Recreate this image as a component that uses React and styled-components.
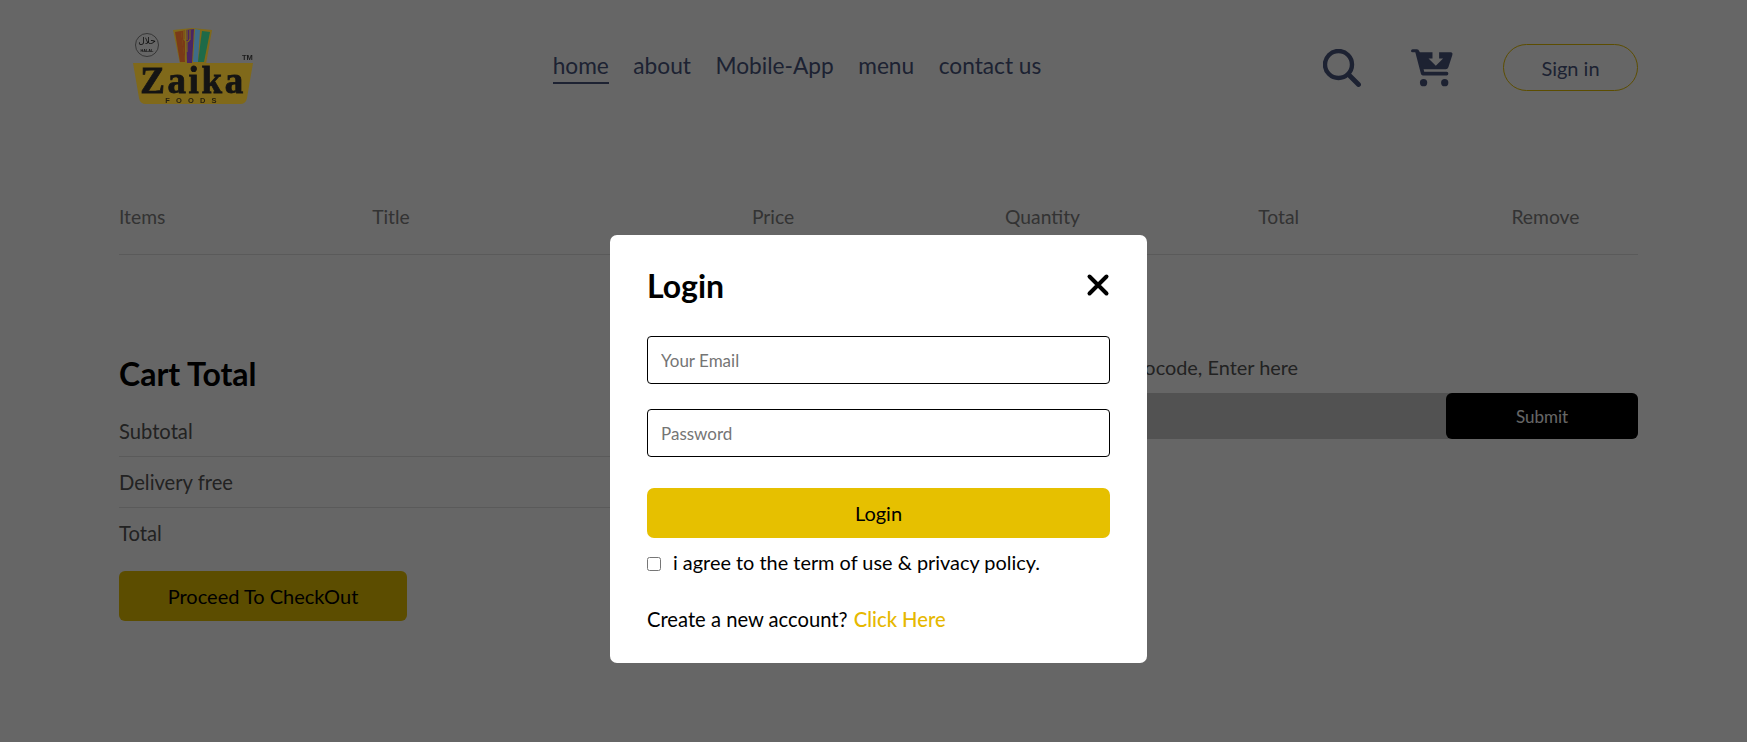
import React from "react";
import styled, { createGlobalStyle } from "styled-components";

const FONT = `"Lato", "Noto Sans", sans-serif`;

const Global = createGlobalStyle`
  * { box-sizing: border-box; }
  html, body { margin: 0; padding: 0; background: #fff; }
  body { font-family: ${FONT}; min-height: 742px; overflow: hidden; }
`;

const Page = styled.div`
  width: 1519px;
  margin: 0 0 0 119px;
`;

const Nav = styled.header`
  height: 134px;
  padding-top: 24px;
  display: flex;
  align-items: flex-start;
  justify-content: space-between;
`;

const LogoSvg = styled.svg`
  width: 150px;
  height: 90px;
  display: block;
  position: relative;
  z-index: 2;
`;

const Menu = styled.ul`
  display: flex;
  gap: 24.5px;
  list-style: none;
  margin: 0 0 0 2px;
  padding: 0;
  padding-top: 28px;
  color: #49557e;
  font-size: 22.7px;
`;

const MenuItem = styled.li`
  padding-bottom: 2px;
  line-height: 28px;
  border-bottom: ${(p) => (p.$active ? "2px solid #49557e" : "2px solid transparent")};
`;

const NavRight = styled.div`
  display: flex;
  align-items: center;
  gap: 50px;
  padding-top: 20px;
`;

const SignIn = styled.button`
  width: 135px;
  height: 47px;
  border: 1px solid #e6c000;
  border-radius: 24px;
  background: transparent;
  color: #49557e;
  font: 400 20px ${FONT};
`;

const Cart = styled.main`
  padding-top: 71px;
`;

const HeadRow = styled.div`
  display: grid;
  grid-template-columns: 1fr 1.5fr 1fr 1fr 1fr 0.5fr;
  color: #808080;
  font-size: 19.3px;
  line-height: 24px;
`;

const Rule = styled.hr`
  border: 0;
  height: 1px;
  background: #e2e2e2;
  margin: ${(p) => p.$m || "13px 0"};
`;

const Bottom = styled.section`
  margin-top: 99px;
  display: flex;
  gap: 210px;
`;

const Totals = styled.div`
  flex: 1;
`;

const Heading = styled.h2`
  margin: 0 0 25px;
  font-size: 32px;
  line-height: 40px;
  font-weight: 700;
  color: #000;
`;

const TotalRow = styled.div`
  display: flex;
  justify-content: space-between;
  color: #555;
  font-size: 20.2px;
  line-height: 24px;
`;

const Checkout = styled.button`
  margin-top: 26px;
  width: 288px;
  height: 50px;
  border: 0;
  border-radius: 6px;
  background: #e6c000;
  color: #000;
  font: 400 20px ${FONT};
`;

const Promo = styled.div`
  flex: 1;
  padding-top: 1px;
`;

const PromoText = styled.p`
  margin: 0 0 14px;
  color: #555;
  font-size: 19.9px;
  line-height: 24px;
`;

const PromoBox = styled.div`
  display: flex;
  height: 46px;
  background: #cdcdcd;
  border-radius: 6px;
  justify-content: flex-end;
`;

const Submit = styled.button`
  width: 192px;
  border: 0;
  border-radius: 6px;
  background: #000;
  color: #fff;
  font: 400 17px ${FONT};
`;

const Overlay = styled.div`
  position: fixed;
  inset: 0;
  z-index: 1;
  background: rgba(0, 0, 0, 0.6);
  display: flex;
  justify-content: center;
  padding: 235px 0 0 10px;
`;

const Modal = styled.form`
  width: 537px;
  height: 428px;
  padding: 30px 37px 0;
  background: #fff;
  border-radius: 7px;
  display: flex;
  flex-direction: column;
  color: #000;
`;

const ModalHead = styled.div`
  display: flex;
  justify-content: space-between;
  align-items: center;
  height: 40px;
  margin-bottom: 31px;
`;

const ModalTitle = styled.h2`
  margin: 0;
  font-size: 32px;
  font-weight: 700;
`;

const CloseIcon = styled.svg`
  width: 24px;
  height: 24px;
  display: block;
`;

const Field = styled.input`
  height: 48px;
  margin-bottom: 25px;
  padding: 0 13px;
  border: 1px solid #000;
  border-radius: 4px;
  font: 400 17px ${FONT};
  &::placeholder { color: #757575; opacity: 1; }
`;

const LoginButton = styled.button`
  height: 50px;
  margin-top: 6px;
  border: 0;
  border-radius: 7px;
  background: #e6c000;
  color: #000;
  font: 400 20px ${FONT};
`;

const Agree = styled.label`
  display: flex;
  align-items: center;
  gap: 12px;
  margin-top: 10px;
  font-size: 19.9px;
  line-height: 28px;
`;

const Check = styled.input`
  width: 14px;
  height: 14px;
  margin: 4px 0 0;
`;

const Create = styled.p`
  margin: 29px 0 0;
  font-size: 20.2px;
  line-height: 28px;
`;

const Link = styled.span`
  color: #e6b800;
  font-weight: 500;
  margin-left: 1px;
`;

const Logo = () => (
  <LogoSvg viewBox="0 0 150 90" aria-label="Zaika Foods">
    <circle cx="28" cy="21" r="11.5" fill="none" stroke="#222" strokeWidth="0.7" />
    <text x="28" y="20" textAnchor="middle" fontFamily="'DejaVu Sans', sans-serif" fontSize="9" fill="#111">حلال</text>
    <text x="28" y="28" textAnchor="middle" fontFamily="'Liberation Sans', sans-serif" fontSize="3.8" fontWeight="700" fill="#111">HALAL</text>
    <path d="M54 6 L73 4 L93 6 L87 40 L61 40 Z" fill="#80691a" />
    <path d="M56 8 L62 7 L66 38 L61 38 Z" fill="#7a3a17" />
    <path d="M62 7 L66 6.5 L66 38 Z" fill="#7a3a17" />
    <path d="M67 6 L75 5 L73 39 L68 39 Z" fill="#4a2562" />
    <path d="M76 5 L81 6 L79 38 L74 38 Z" fill="#3f6c88" />
    <path d="M83 7 L91 8 L85 38 L79 38 Z" fill="#1d6a48" />
    <path d="M65 7 V16 M68 6 V16 M71 6 V16 M65 15 Q68 21 71 15 M68 18 V28" fill="none" stroke="#80691a" strokeWidth="1.1" />
    <path d="M14 39 H134 L128 74 Q127 80 121 80 H27 Q21 80 20 74 Z" fill="#80691a" />
    <text x="74" y="69" textAnchor="middle" fontFamily="'Liberation Serif', serif" fontWeight="700" fontSize="37" letterSpacing="2.6" fill="#141414" stroke="#141414" strokeWidth="0.8">Zaika</text>
    <text x="75" y="79" textAnchor="middle" fontFamily="'Liberation Sans', sans-serif" fontWeight="700" fontSize="7.5" letterSpacing="6.2" fill="#241f10">FOODS</text>
    <text x="123" y="36" fontFamily="'Liberation Sans', sans-serif" fontWeight="700" fontSize="7.5" fill="#1c1c1c">TM</text>
  </LogoSvg>
);

const SearchIcon = () => (
  <svg width="38" height="38" viewBox="0 0 38 38" fill="none" stroke="#49557e" strokeLinecap="round">
    <circle cx="15.5" cy="15.5" r="13.5" strokeWidth="4.4" />
    <path d="M25.5 25.5 L35.5 35.5" strokeWidth="4.8" />
  </svg>
);

const CartIcon = () => (
  <svg width="42" height="38" viewBox="0 0 127 113" fill="#49557e">
    <path fillRule="evenodd" d="M5 0 H18 Q23 0 25 6 L27 9 H120 Q127 9 125 17 L113 54 Q111 60 105 60 H38 L40 68 H108 Q113 68 113 73 Q113 79 108 79 H36 Q31 79 30 74 L13 9 H5 Q0 9 0 5 Q0 0 5 0 Z M65 9 V28 H53 L75 50 L97 28 H85 V9 Z" />
    <circle cx="38" cy="101" r="11" />
    <circle cx="102" cy="101" r="11" />
  </svg>
);

export default function App() {
  return (
    <>
      <Global />
      <Page>
        <Nav>
          <Logo />
          <Menu>
            <MenuItem $active>home</MenuItem>
            <MenuItem>about</MenuItem>
            <MenuItem>Mobile-App</MenuItem>
            <MenuItem>menu</MenuItem>
            <MenuItem>contact us</MenuItem>
          </Menu>
          <NavRight>
            <SearchIcon />
            <CartIcon />
            <SignIn type="button">Sign in</SignIn>
          </NavRight>
        </Nav>
        <Cart>
          <HeadRow>
            <span>Items</span>
            <span>Title</span>
            <span>Price</span>
            <span>Quantity</span>
            <span>Total</span>
            <span>Remove</span>
          </HeadRow>
          <Rule $m="25px 0 13px" />
          <Bottom>
            <Totals>
              <Heading>Cart Total</Heading>
              <TotalRow><span>Subtotal</span><span>$0</span></TotalRow>
              <Rule />
              <TotalRow><span>Delivery free</span><span>$0</span></TotalRow>
              <Rule />
              <TotalRow><span>Total</span><span>$0</span></TotalRow>
              <Checkout type="button">Proceed To CheckOut</Checkout>
            </Totals>
            <Promo>
              <PromoText>If you have a promocode, Enter here</PromoText>
              <PromoBox><Submit type="button">Submit</Submit></PromoBox>
            </Promo>
          </Bottom>
        </Cart>
      </Page>
      <Overlay>
        <Modal onSubmit={(e) => e.preventDefault()}>
          <ModalHead>
            <ModalTitle>Login</ModalTitle>
            <CloseIcon viewBox="0 0 24 24" fill="none" stroke="#000" strokeWidth="4" strokeLinecap="round">
              <path d="M3.5 3.5 L20.5 20.5 M20.5 3.5 L3.5 20.5" />
            </CloseIcon>
          </ModalHead>
          <Field type="email" placeholder="Your Email" />
          <Field type="password" placeholder="Password" />
          <LoginButton type="submit">Login</LoginButton>
          <Agree><Check type="checkbox" />i agree to the term of use &amp; privacy policy.</Agree>
          <Create>Create a new account? <Link>Click Here</Link></Create>
        </Modal>
      </Overlay>
    </>
  );
}
